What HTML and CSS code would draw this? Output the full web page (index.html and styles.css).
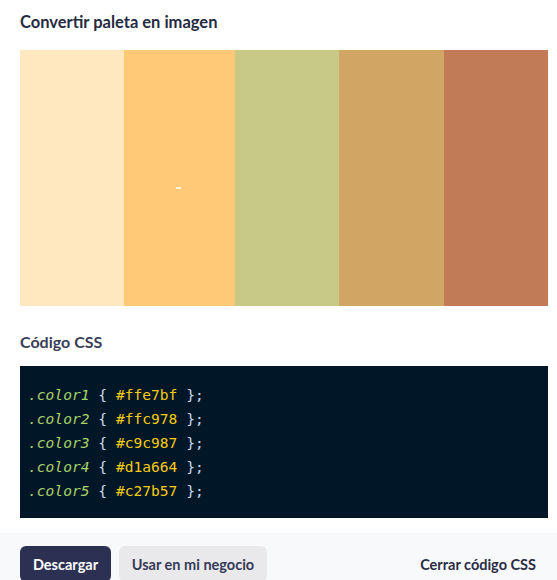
FILE: index.html
```html
<!DOCTYPE html>
<html lang="es">
<head>
<meta charset="utf-8">
<title>Convertir paleta en imagen</title>
<link rel="stylesheet" href="styles.css">
</head>
<body>
<div class="modal">
  <div class="content">
    <h2 class="title">Convertir paleta en imagen</h2>
    <div class="palette">
      <div class="swatch s1"></div>
      <div class="swatch s2"><span class="mark"></span></div>
      <div class="swatch s3"></div>
      <div class="swatch s4"></div>
      <div class="swatch s5"></div>
    </div>
    <h3 class="subtitle">Código CSS</h3>
    <pre class="code"><span class="cls">.color1</span> <span class="pn">{</span> <span class="hex">#ffe7bf</span> <span class="pn">};</span>
<span class="cls">.color2</span> <span class="pn">{</span> <span class="hex">#ffc978</span> <span class="pn">};</span>
<span class="cls">.color3</span> <span class="pn">{</span> <span class="hex">#c9c987</span> <span class="pn">};</span>
<span class="cls">.color4</span> <span class="pn">{</span> <span class="hex">#d1a664</span> <span class="pn">};</span>
<span class="cls">.color5</span> <span class="pn">{</span> <span class="hex">#c27b57</span> <span class="pn">};</span></pre>
  </div>
  <div class="footer">
    <div class="actions">
      <button class="btn btn-primary">Descargar</button>
      <button class="btn btn-secondary">Usar en mi negocio</button>
    </div>
    <button class="btn btn-link">Cerrar código CSS</button>
  </div>
</div>
</body>
</html>
```
FILE: styles.css
```css
* { box-sizing: border-box; }
html, body { margin: 0; padding: 0; background: #ffffff; }
body {
  font-family: "Lato", "Noto Sans", sans-serif;
  color: #2a2d45;
  width: 557px;
  height: 580px;
  overflow: hidden;
}
.modal { display: flex; flex-direction: column; }
.content { padding: 12px 9px 0 20px; }
.title {
  margin: 0;
  font-size: 16.5px;
  line-height: 20px;
  font-weight: 700;
  color: #262a40;
}
.palette {
  display: flex;
  height: 256px;
  margin-top: 18px;
}
.swatch { height: 100%; }
.s1 { background: #ffe7bf; width: 104px; }
.s2 { background: #ffc978; width: 111px; display: flex; align-items: center; justify-content: center; }
.s3 { background: #c9c987; width: 104px; }
.s4 { background: #d1a664; width: 105px; }
.s5 { background: #c27b57; width: 104px; }
.mark {
  width: 5px;
  height: 2px;
  margin-top: 20px;
  margin-right: 2px;
  background: #fff1dc;
}
.subtitle {
  margin: 26px 0 0;
  font-size: 16px;
  line-height: 20px;
  font-weight: 700;
  color: #3a3e57;
}
.code {
  margin: 14px 0 0;
  background: #011627;
  padding: 17px 8px 15px;
  height: 152px;
  font-family: "DejaVu Sans Mono", "Liberation Mono", monospace;
  font-size: 14.6px;
  line-height: 24px;
  color: #d6deeb;
}
.cls { color: #a5d46a; font-style: italic; }
.pn { color: #c8dcf0; }
.hex { color: #f6cc14; }
.footer {
  margin-top: 15px;
  background: #f8f9fb;
  padding: 13px 20px 0;
  height: 60px;
  display: flex;
  justify-content: space-between;
  align-items: flex-start;
}
.actions { display: flex; gap: 8px; }
.btn {
  font-family: "Lato", "Noto Sans", sans-serif;
  font-size: 14.5px;
  font-weight: 700;
  height: 36px;
  border: none;
  border-radius: 6px;
  padding: 0 12px;
  cursor: pointer;
}
.btn-primary { background: #2c3154; color: #ffffff; width: 91px; }
.btn-secondary { background: #e9e9ec; color: #363a56; width: 148px; }
.btn-link { background: transparent; color: #2a2d45; padding: 0 1px; }
```
